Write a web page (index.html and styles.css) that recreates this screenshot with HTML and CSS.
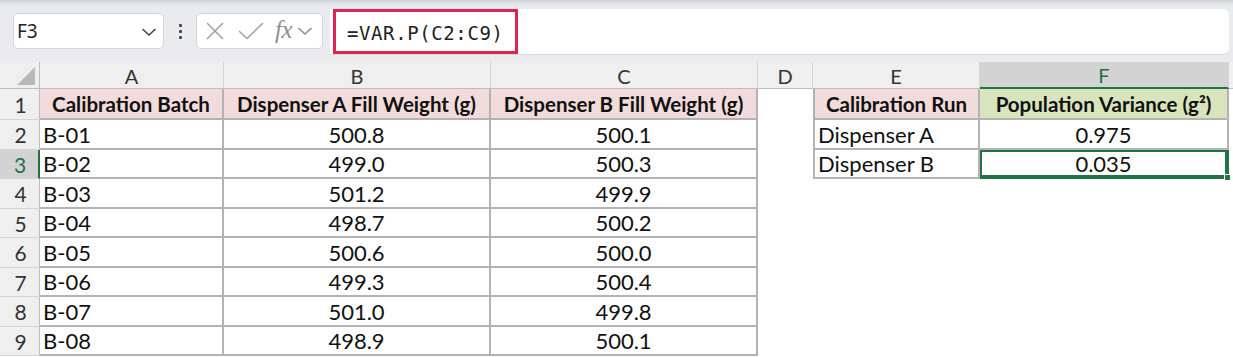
FILE: index.html
```html
<!DOCTYPE html>
<html>
<head>
<meta charset="utf-8">
<link rel="stylesheet" href="styles.css">
</head>
<body>
<div class="toolbar">
  <div class="namebox">
    <span class="nb-text">F3</span>
    <svg class="nb-chev" width="16" height="10" viewBox="0 0 16 10"><path d="M1.5 2 L8 8 L14.5 2" fill="none" stroke="#444" stroke-width="1.6"/></svg>
  </div>
  <div class="dots"><i></i><i></i><i></i></div>
  <div class="fxbox">
    <svg class="ic-x" width="20" height="18" viewBox="0 0 20 18"><path d="M2 1 L18 17 M18 1 L2 17" fill="none" stroke="#a3a3a3" stroke-width="1.6"/></svg>
    <svg class="ic-check" width="26" height="18" viewBox="0 0 26 18"><path d="M1 9 L9 16.5 L25 1" fill="none" stroke="#a3a3a3" stroke-width="1.6"/></svg>
    <span class="fx">fx</span>
    <svg class="fx-chev" width="16" height="10" viewBox="0 0 16 10"><path d="M1.5 2 L8 8 L14.5 2" fill="none" stroke="#8c8c8c" stroke-width="1.5"/></svg>
  </div>
  <div class="formula">
    <div class="formula-hl">=VAR.P(C2:C9)</div>
  </div>
</div>

<div class="sheet">
  <!-- column headers -->
  <div class="ch corner"><svg width="40" height="27" viewBox="0 0 40 27"><polygon points="35,5 35,23 17,23" fill="#b8b8b8"/></svg></div>
  <div class="ch">A</div>
  <div class="ch">B</div>
  <div class="ch">C</div>
  <div class="ch">D</div>
  <div class="ch">E</div>
  <div class="ch ch-sel">F</div>
  <div class="ch ch-end"></div>

  <!-- row 1 -->
  <div class="rh">1</div>
  <div class="t hd">Calibration Batch</div>
  <div class="t hd">Dispenser A Fill Weight (g)</div>
  <div class="t hd">Dispenser B Fill Weight (g)</div>
  <div class="blank"></div>
  <div class="t hd tl">Calibration Run</div>
  <div class="t hd hd-green">Population Variance (g²)</div>
  <div class="blank"></div>

  <!-- row 2 -->
  <div class="rh">2</div>
  <div class="t l">B-01</div>
  <div class="t n">500.8</div>
  <div class="t n">500.1</div>
  <div class="blank"></div>
  <div class="t l tl">Dispenser A</div>
  <div class="t n">0.975</div>
  <div class="blank"></div>

  <!-- row 3 -->
  <div class="rh rh-sel">3</div>
  <div class="t l">B-02</div>
  <div class="t n">499.0</div>
  <div class="t n">500.3</div>
  <div class="blank"></div>
  <div class="t l tl">Dispenser B</div>
  <div class="t n sel">0.035<span class="handle"></span></div>
  <div class="blank"></div>

  <!-- row 4 -->
  <div class="rh">4</div>
  <div class="t l">B-03</div>
  <div class="t n">501.2</div>
  <div class="t n">499.9</div>
  <div class="blank"></div><div class="blank"></div><div class="blank"></div><div class="blank"></div>

  <!-- row 5 -->
  <div class="rh">5</div>
  <div class="t l">B-04</div>
  <div class="t n">498.7</div>
  <div class="t n">500.2</div>
  <div class="blank"></div><div class="blank"></div><div class="blank"></div><div class="blank"></div>

  <!-- row 6 -->
  <div class="rh">6</div>
  <div class="t l">B-05</div>
  <div class="t n">500.6</div>
  <div class="t n">500.0</div>
  <div class="blank"></div><div class="blank"></div><div class="blank"></div><div class="blank"></div>

  <!-- row 7 -->
  <div class="rh">7</div>
  <div class="t l">B-06</div>
  <div class="t n">499.3</div>
  <div class="t n">500.4</div>
  <div class="blank"></div><div class="blank"></div><div class="blank"></div><div class="blank"></div>

  <!-- row 8 -->
  <div class="rh">8</div>
  <div class="t l">B-07</div>
  <div class="t n">501.0</div>
  <div class="t n">499.8</div>
  <div class="blank"></div><div class="blank"></div><div class="blank"></div><div class="blank"></div>

  <!-- row 9 -->
  <div class="rh">9</div>
  <div class="t l">B-08</div>
  <div class="t n">498.9</div>
  <div class="t n">500.1</div>
  <div class="blank"></div><div class="blank"></div><div class="blank"></div><div class="blank"></div>
</div>
</body>
</html>
```

FILE: styles.css
```css
* { box-sizing: border-box; }
html, body { margin: 0; padding: 0; background: #ffffff; }
body { width: 1233px; height: 357px; overflow: hidden; font-family: "Lato", "Liberation Sans", sans-serif; }

/* ---------- toolbar ---------- */
.toolbar {
  height: 62px;
  display: flex;
  align-items: flex-start;
  padding: 13px 0 0 13px;
  background: linear-gradient(#cdd0d4 0px, #e2e5e8 4px, #e9ebee 7px, #e9ebee 100%);
}
.namebox {
  width: 151px;
  height: 36px;
  background: #fff;
  border: 1px solid #d3d5d8;
  border-radius: 5px;
  display: flex;
  align-items: center;
  justify-content: space-between;
  padding: 0 6px 0 3px;
}
.nb-text { font-family: "Noto Sans", "Open Sans", sans-serif; font-size: 19px; color: #222; }
.nb-chev { margin-top: 2px; }
.dots {
  width: 32px;
  height: 36px;
  display: flex;
  flex-direction: column;
  align-items: center;
  justify-content: center;
  gap: 3px;
}
.dots i { display: block; width: 3px; height: 3px; background: #444; border-radius: 1px; }
.fxbox {
  width: 127px;
  height: 36px;
  background: #fff;
  border: 1px solid #d3d5d8;
  border-radius: 5px;
  display: flex;
  align-items: center;
  padding-left: 8px;
}
.ic-x { margin-right: 13px; }
.ic-check { margin-right: 11px; }
.fx {
  font-family: "Liberation Serif", "DejaVu Serif", serif;
  font-style: italic;
  font-size: 25px;
  color: #8f8f8f;
  margin-right: 5px;
  margin-top: -3px;
  letter-spacing: -0.5px;
}
.formula {
  margin-left: 7px;
  margin-top: -4px;
  width: 899px;
  height: 46px;
  background: #fff;
  border-radius: 0 6px 6px 0;
  padding: 0 0 0 3px;
  border-bottom: 1px solid #d6d8db;
}
.formula-hl {
  width: 185px;
  height: 45px;
  border: 3px solid #de2450;
  font-family: "DejaVu Sans Mono", monospace;
  font-size: 19px;
  letter-spacing: 0.6px;
  color: #222;
  display: flex;
  align-items: center;
  padding-left: 11px;
  padding-top: 2px;
}

/* ---------- sheet ---------- */
.sheet {
  display: grid;
  grid-template-columns: 40px 184px 267px 267px 55px 167px 249px 1fr;
  grid-template-rows: 27px 31px 30px 29px 30px 29px 30px 29px 30px 29px;
  font-size: 22px;
  color: #111;
}
.ch {
  background: #efefef;
  border-right: 1px solid #d4d4d4;
  border-bottom: 1px solid #bdbdbd;
  display: flex;
  align-items: center;
  justify-content: center;
  color: #333;
  font-size: 20px;
  padding-top: 1px;
}
.corner { border-right: 1px solid #bdbdbd; padding: 0; display: block; }
.corner svg { display: block; }
.ch-end { border-right: none; }
.ch-sel {
  background: #d3d3d3;
  color: #1e7145;
  border-bottom: 2px solid #217346;
}
.rh {
  background: #efefef;
  border-right: 1px solid #bdbdbd;
  border-bottom: 1px solid #d4d4d4;
  display: flex;
  align-items: center;
  justify-content: center;
  color: #333;
  font-size: 21px;
  padding-left: 2px;
}
.rh-sel {
  background: #d3d3d3;
  color: #1e7145;
  border-right: 2px solid #217346;
}
.blank { background: #fff; }
.t {
  border-right: 2px solid #b3b3b3;
  border-bottom: 2px solid #b3b3b3;
  display: flex;
  align-items: center;
  white-space: nowrap;
  overflow: visible;
  background: #fff;
}
.tl { border-left: 2px solid #b3b3b3; }
.hd {
  background: #f2dcdb;
  font-weight: 700;
  font-size: 20.5px;
  justify-content: center;
  padding-top: 1px;
}
.hd-green { background: #d8e4bc; }
.l { padding-left: 3px; }
.n { justify-content: center; }
.sel {
  position: relative;
  box-shadow: inset 0 0 0 2px #217346;
  border-color: #217346;
}
.handle {
  position: absolute;
  right: -4px;
  bottom: -4px;
  width: 7px;
  height: 7px;
  background: #217346;
  border: 1px solid #fff;
}
```
